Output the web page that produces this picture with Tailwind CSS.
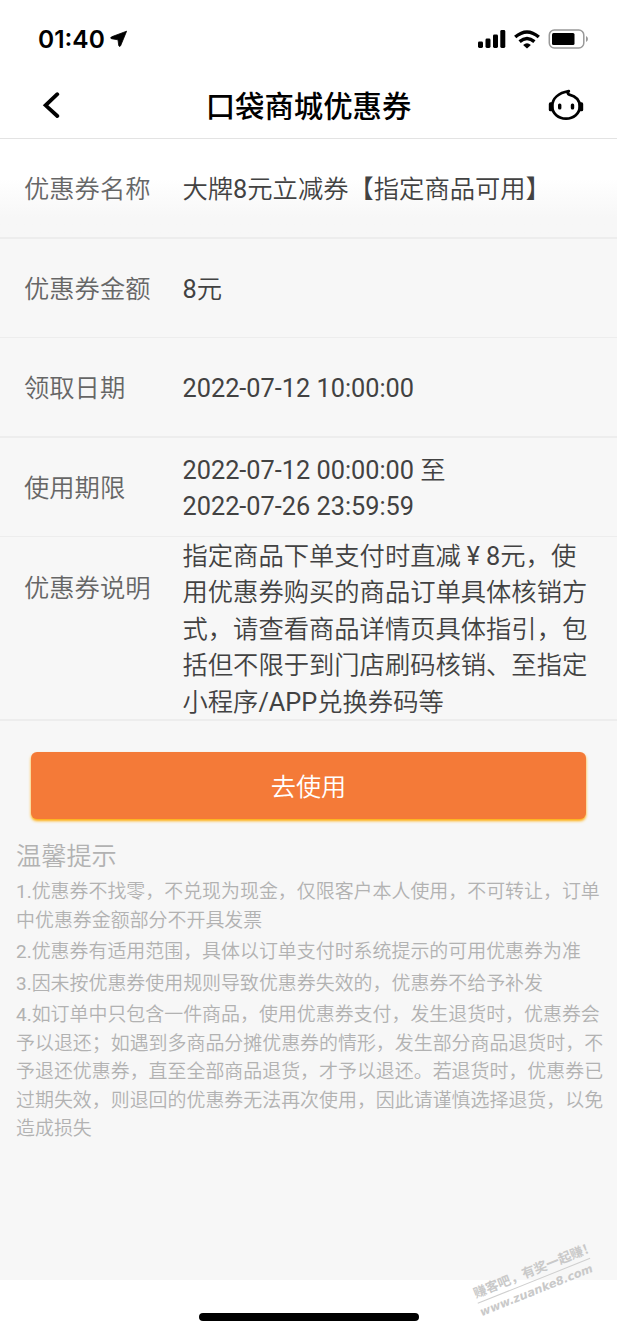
<!DOCTYPE html>
<html lang="zh-CN">
<head>
    <meta charset="UTF-8">
    <meta name="viewport" content="width=device-width, initial-scale=1.0">
    <title>口袋商城优惠券</title>
    <script src="https://cdn.jsdelivr.net/npm/@tailwindcss/browser@4"></script>
</head>
<body class="relative flex h-[1334px] w-[617px] flex-col overflow-hidden bg-white font-[Roboto,'Noto_Sans_CJK_SC_DemiLight','Noto_Sans_CJK_SC',sans-serif]">

    <!-- Status bar -->
    <div class="flex h-[72px] items-center justify-between pt-1.5 pr-[28px] pl-[38px]">
        <div class="flex items-center gap-[5px]">
            <span class="font-[Inter,sans-serif] text-[24.5px] leading-none font-semibold">01:40</span>
            <svg class="size-[18px]" viewBox="0 0 18 18"><path d="M16.6 1.2 L10.6 15.8 Q9.3 17.4 8.7 15.4 L8 9.8 L1.4 8.7 Q-.2 8 1.6 6.8 Z" fill="#000" stroke="#000" stroke-width=".8" stroke-linejoin="round"/></svg>
        </div>
        <div class="flex items-center">
            <svg class="h-[18px] w-[28px]" viewBox="0 0 28 18">
                <rect x="0" y="11.5" width="5" height="6.5" rx="1.4"/>
                <rect x="7.5" y="8.5" width="5" height="9.5" rx="1.4"/>
                <rect x="15" y="4.5" width="5" height="13.5" rx="1.4"/>
                <rect x="22.3" y="0" width="5" height="18" rx="1.4"/>
            </svg>
            <svg class="ml-2 h-[19px] w-[26px]" viewBox="0 0 26 19" fill="none" stroke="#000" stroke-width="3.4">
                <path d="M1.2 7 Q13 -3.2 24.8 7"/>
                <path d="M5.6 11.6 Q13 5.2 20.4 11.6"/>
                <path d="M13 18.6 L9.1 14.9 Q13 11.8 16.9 14.9 Z" fill="#000" stroke="none"/>
            </svg>
            <svg class="ml-2 h-[20px] w-[41px]" viewBox="0 0 41 20">
                <rect x="1.3" y="1" width="34.5" height="18" rx="5" fill="none" stroke="#999" stroke-width="1.5"/>
                <rect x="4" y="4" width="22.5" height="12" rx="1.5"/>
                <path d="M38 7 Q40 8 40 10 T38 13 Z" fill="#999"/>
            </svg>
        </div>
    </div>

    <!-- Title bar -->
    <header class="flex h-[67px] items-center justify-between border-b border-[#e3e3e3] pr-[33px] pl-[42px]">
        <svg class="h-[26px] w-[18px]" viewBox="0 0 18 26" fill="none" stroke="#000" stroke-width="3.8" stroke-linecap="round" stroke-linejoin="miter"><path d="M15.3 2.2 L3.6 13.3 L15.3 24"/></svg>
        <h1 class="pb-px pl-[9px] font-['Noto_Sans_CJK_SC',sans-serif] text-[29.4px] leading-none font-medium text-black">口袋商城优惠券</h1>
        <svg class="h-[32px] w-[36px]" viewBox="0 0 36 32">
            <path d="M20.8 2.2 Q18.8 4.6 21.3 5.6 C27.5 7.2 31.8 11.4 31.8 17.3 C31.8 24.6 25.5 29.6 18 29.6 C10.5 29.6 4.2 24.6 4.2 17.3 C4.2 9.5 10.5 4 20.8 2.2 Z" fill="none" stroke="#000" stroke-width="2.8" stroke-linejoin="round"/>
            <rect x=".8" y="13.3" width="4.6" height="9" rx="1.6"/>
            <rect x="30.6" y="13.3" width="4.6" height="9" rx="1.6"/>
            <rect x="10" y="14.6" width="3.4" height="6" rx="1.5"/>
            <rect x="22.8" y="14.6" width="3.4" height="6" rx="1.5"/>
        </svg>
    </header>

    <main class="h-[1141px] bg-[#f7f7f7]">
        <!-- Coupon details -->
        <dl class="text-[25.3px] leading-[36.4px] whitespace-nowrap text-[#424242]">
            <div class="flex h-[99.5px] items-center border-b-2 border-[#ededed] bg-linear-to-b from-white from-40% to-[#f7f7f7] to-80% pt-[5px] pl-[24px]">
                <dt class="w-[158.5px] text-[#666]">优惠券名称</dt>
                <dd>大牌8元立减券【指定商品可用】</dd>
            </div>
            <div class="flex h-[99.5px] items-center border-b border-[#ededed] pt-[5px] pl-[24px]">
                <dt class="w-[158.5px] text-[#666]">优惠券金额</dt>
                <dd>8元</dd>
            </div>
            <div class="flex h-[99.5px] items-center border-b-2 border-[#ededed] pt-[5px] pl-[24px]">
                <dt class="w-[158.5px] text-[#666]">领取日期</dt>
                <dd>2022-07-12 10:00:00</dd>
            </div>
            <div class="flex h-[99.5px] items-center border-b border-[#ededed] pt-[5px] pl-[24px]">
                <dt class="w-[158.5px] text-[#666]">使用期限</dt>
                <dd>2022-07-12 00:00:00 至<br>2022-07-26 23:59:59</dd>
            </div>
            <div class="flex h-[184px] border-b-2 border-[#ededed] pt-[2px] pl-[24px]">
                <dt class="w-[158.5px] pt-[32px] text-[#666]">优惠券说明</dt>
                <dd>指定商品下单支付时直减<span class="inline-block w-[25.3px] text-center text-[25px] leading-none">¥</span>8元，使<br>用优惠券购买的商品订单具体核销方<br>式，请查看商品详情页具体指引，包<br>括但不限于到门店刷码核销、至指定<br>小程序/APP兑换券码等</dd>
            </div>
        </dl>

        <button class="mx-[31px] mt-[31px] block h-[67px] w-[555px] rounded-md bg-[#f47a38] pt-[4px] text-[25.2px] text-white shadow-[0_2px_3px_#ffaa00]">去使用</button>

        <!-- Tips -->
        <section class="mt-[20px] pl-4 whitespace-nowrap text-[#b2b2b2]">
            <h2 class="text-[25.2px] leading-[36px]">温馨提示</h2>
            <div class="mt-[3px] flex flex-col gap-[3px] text-[18.95px] leading-[28.5px]">
                <p>1.优惠券不找零，不兑现为现金，仅限客户本人使用，不可转让，订单<br>中优惠券金额部分不开具发票</p>
                <p>2.优惠券有适用范围，具体以订单支付时系统提示的可用优惠券为准</p>
                <p>3.因未按优惠券使用规则导致优惠券失效的，优惠券不给予补发</p>
                <p>4.如订单中只包含一件商品，使用优惠券支付，发生退货时，优惠券会<br>予以退还；如遇到多商品分摊优惠券的情形，发生部分商品退货时，不<br>予退还优惠券，直至全部商品退货，才予以退还。若退货时，优惠券已<br>过期失效，则退回的优惠券无法再次使用，因此请谨慎选择退货，以免<br>造成损失</p>
            </div>
        </section>
    </main>

    <!-- Home indicator -->
    <div class="mx-auto mt-[33px] h-2 w-[220px] rounded-full bg-black"></div>

    <!-- Watermark -->
    <div class="absolute top-[1260px] left-[475px] w-[119px] -rotate-[21.8deg] font-bold whitespace-nowrap text-[#c9c9c9]">
        <p class="-ml-[2px] border-b border-[#cfcfcf] font-['Noto_Sans_CJK_SC',sans-serif] text-[13px] leading-[20px]">赚客吧，有奖一起赚！</p>
        <p class="-ml-[3px] font-['DejaVu_Sans',sans-serif] text-[11.5px] leading-[18px] italic">www.zuanke8.com</p>
    </div>

</body>
</html>
